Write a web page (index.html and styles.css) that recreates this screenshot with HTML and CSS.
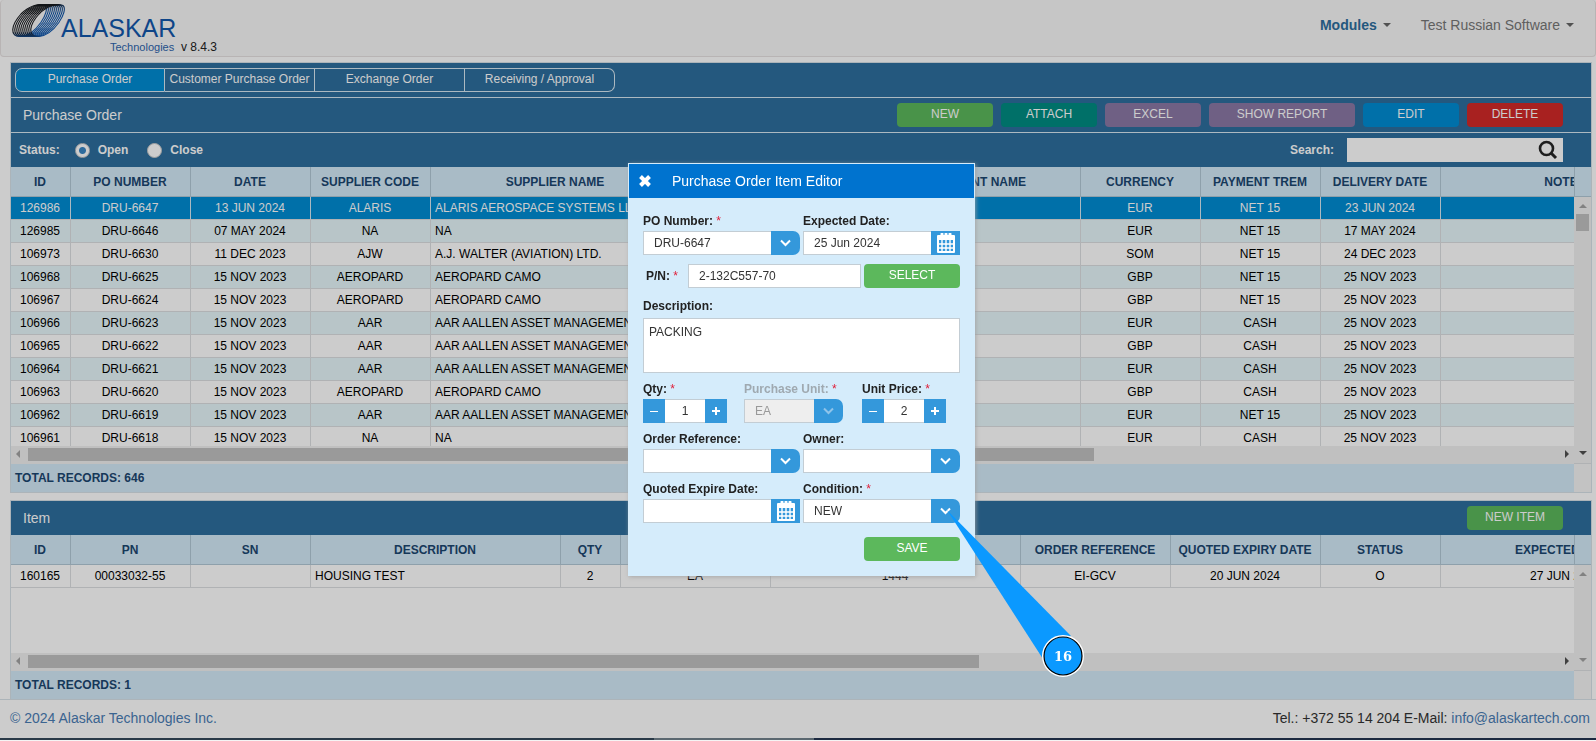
FILE: index.html
```html
<!DOCTYPE html>
<html lang="en">
<head>
    <meta charset="UTF-8">
    <meta name="viewport" content="width=device-width, initial-scale=1.0">
    <title>Purchase Order</title>
    <link rel="stylesheet" href="styles.css">
</head>
<body>

<header class="navbar">
  <div class="brand">
    <svg class="logo" width="176" height="56" viewBox="0 0 176 56" role="img" aria-label="Alaskar Technologies">
      <defs>
        <linearGradient id="ring" gradientUnits="userSpaceOnUse" x1="-8" y1="-6" x2="8" y2="10">
          <stop offset="0.2" stop-color="#16181c"/>
          <stop offset="0.7" stop-color="#1257ab"/>
        </linearGradient>
        <path id="loop" d="M15 -15.5C21 -10 6 14 -9 15.500C-21 16 -19 4 -9 -7C-1 -15 9 -18 15 -15.500Z"/>
      </defs>
      <g fill="none" stroke="url(#ring)" stroke-width="1.1">
        <use href="#loop" x="29" y="21"/>
        <use href="#loop" x="31" y="21"/>
        <use href="#loop" x="33" y="21"/>
        <use href="#loop" x="35" y="21"/>
        <use href="#loop" x="37" y="21"/>
        <use href="#loop" x="39" y="21"/>
        <use href="#loop" x="41" y="21"/>
        <use href="#loop" x="43" y="21"/>
        <use href="#loop" x="45" y="21"/>
        <use href="#loop" x="47" y="21"/>
      </g>
      <text class="logo-name" x="60" y="37">ALASKAR</text>
      <text class="logo-sub" x="109" y="51">Technologies</text>
    </svg>
    <span class="version">v 8.4.3</span>
  </div>
  <nav class="menu">
    <button type="button" class="menu-item strong">Modules <span class="caret"></span></button>
    <button type="button" class="menu-item">Test Russian Software <span class="caret"></span></button>
  </nav>
</header>

<main>
  <section class="panel">
    <div class="bar">
      <div class="tabs">
        <button type="button" class="tab active">Purchase Order</button>
        <button type="button" class="tab">Customer Purchase Order</button>
        <button type="button" class="tab">Exchange Order</button>
        <button type="button" class="tab">Receiving / Approval</button>
      </div>
    </div>
    <div class="bar lined">
      <h1 class="title">Purchase Order</h1>
      <div class="actions">
        <button type="button" class="btn green">NEW</button>
        <button type="button" class="btn teal">ATTACH</button>
        <button type="button" class="btn purple">EXCEL</button>
        <button type="button" class="btn purple wide">SHOW REPORT</button>
        <button type="button" class="btn blue">EDIT</button>
        <button type="button" class="btn red">DELETE</button>
      </div>
    </div>
    <div class="bar lined filter">
      <div class="status">
        <span>Status:</span>
        <label><input type="radio" name="status" checked> Open</label>
        <label><input type="radio" name="status"> Close</label>
      </div>
      <div class="search">
        <label for="search">Search:</label>
        <div class="search-box">
          <input type="text" id="search">
          <svg width="20" height="20" viewBox="0 0 20 20"><circle cx="8.5" cy="8.5" r="6.5" fill="none" stroke="#262626" stroke-width="2.6"/><path d="M13 13l5 5" stroke="#262626" stroke-width="3"/></svg>
        </div>
      </div>
    </div>

    <div class="grid">
      <div class="view orders">
        <table>
          <colgroup>
            <col class="w60"><col class="w120"><col class="w120"><col class="w120"><col class="w250"><col class="w210"><col class="w190"><col class="w120"><col class="w120"><col class="w120"><col class="w250">
          </colgroup>
          <thead>
            <tr><th>ID</th><th>PO NUMBER</th><th>DATE</th><th>SUPPLIER CODE</th><th>SUPPLIER NAME</th><th>CLIENT CODE</th><th>CLIENT NAME</th><th>CURRENCY</th><th>PAYMENT TREM</th><th>DELIVERY DATE</th><th>NOTES</th></tr>
          </thead>
          <tbody>
            <tr class="selected"><td>126986</td><td>DRU-6647</td><td>13 JUN 2024</td><td>ALARIS</td><td class="left">ALARIS AEROSPACE SYSTEMS LLC</td><td></td><td></td><td>EUR</td><td>NET 15</td><td>23 JUN 2024</td><td></td></tr>
            <tr><td>126985</td><td>DRU-6646</td><td>07 MAY 2024</td><td>NA</td><td class="left">NA</td><td></td><td></td><td>EUR</td><td>NET 15</td><td>17 MAY 2024</td><td></td></tr>
            <tr><td>106973</td><td>DRU-6630</td><td>11 DEC 2023</td><td>AJW</td><td class="left">A.J. WALTER (AVIATION) LTD.</td><td></td><td></td><td>SOM</td><td>NET 15</td><td>24 DEC 2023</td><td></td></tr>
            <tr><td>106968</td><td>DRU-6625</td><td>15 NOV 2023</td><td>AEROPARD</td><td class="left">AEROPARD CAMO</td><td></td><td></td><td>GBP</td><td>NET 15</td><td>25 NOV 2023</td><td></td></tr>
            <tr><td>106967</td><td>DRU-6624</td><td>15 NOV 2023</td><td>AEROPARD</td><td class="left">AEROPARD CAMO</td><td></td><td></td><td>GBP</td><td>NET 15</td><td>25 NOV 2023</td><td></td></tr>
            <tr><td>106966</td><td>DRU-6623</td><td>15 NOV 2023</td><td>AAR</td><td class="left">AAR AALLEN ASSET MANAGEMENT</td><td></td><td></td><td>EUR</td><td>CASH</td><td>25 NOV 2023</td><td></td></tr>
            <tr><td>106965</td><td>DRU-6622</td><td>15 NOV 2023</td><td>AAR</td><td class="left">AAR AALLEN ASSET MANAGEMENT</td><td></td><td></td><td>GBP</td><td>CASH</td><td>25 NOV 2023</td><td></td></tr>
            <tr><td>106964</td><td>DRU-6621</td><td>15 NOV 2023</td><td>AAR</td><td class="left">AAR AALLEN ASSET MANAGEMENT</td><td></td><td></td><td>EUR</td><td>CASH</td><td>25 NOV 2023</td><td></td></tr>
            <tr><td>106963</td><td>DRU-6620</td><td>15 NOV 2023</td><td>AEROPARD</td><td class="left">AEROPARD CAMO</td><td></td><td></td><td>GBP</td><td>CASH</td><td>25 NOV 2023</td><td></td></tr>
            <tr><td>106962</td><td>DRU-6619</td><td>15 NOV 2023</td><td>AAR</td><td class="left">AAR AALLEN ASSET MANAGEMENT</td><td></td><td></td><td>EUR</td><td>NET 15</td><td>25 NOV 2023</td><td></td></tr>
            <tr><td>106961</td><td>DRU-6618</td><td>15 NOV 2023</td><td>NA</td><td class="left">NA</td><td></td><td></td><td>EUR</td><td>CASH</td><td>25 NOV 2023</td><td></td></tr>
          </tbody>
        </table>
      </div>
      <div class="side">
        <div class="corner"></div>
        <div class="vscroll">
          <span class="arrow up"></span>
          <span class="vthumb"></span>
          <span class="arrow down on"></span>
        </div>
      </div>
      <div class="hscroll">
        <span class="arrow prev"></span>
        <span class="track"><span class="thumb orders-thumb"></span></span>
        <span class="arrow next on"></span>
      </div>
      <div class="total">TOTAL RECORDS: 646</div>
      <div class="total-end"></div>
    </div>
  </section>

  <section class="panel">
    <div class="bar">
      <h2 class="title">Item</h2>
      <div class="actions">
        <button type="button" class="btn green">NEW ITEM</button>
      </div>
    </div>
    <div class="grid">
      <div class="view items">
        <table>
          <colgroup>
            <col class="w60"><col class="w120"><col class="w120"><col class="w250"><col class="w60"><col class="w150"><col class="w250"><col class="w150"><col class="w150"><col class="w120"><col class="w250">
          </colgroup>
          <thead>
            <tr><th>ID</th><th>PN</th><th>SN</th><th>DESCRIPTION</th><th>QTY</th><th>UNIT</th><th>PRICE</th><th>ORDER REFERENCE</th><th>QUOTED EXPIRY DATE</th><th>STATUS</th><th>EXPECTED DATE</th></tr>
          </thead>
          <tbody>
            <tr><td>160165</td><td>00033032-55</td><td></td><td class="left">HOUSING TEST</td><td>2</td><td>EA</td><td>1444</td><td>EI-GCV</td><td>20 JUN 2024</td><td>O</td><td>27 JUN 2024</td></tr>
          </tbody>
        </table>
      </div>
      <div class="side">
        <div class="corner"></div>
        <div class="vscroll">
          <span class="arrow up"></span>
          <span class="arrow down"></span>
        </div>
      </div>
      <div class="hscroll">
        <span class="arrow prev"></span>
        <span class="track"><span class="thumb items-thumb"></span></span>
        <span class="arrow next on"></span>
      </div>
      <div class="total">TOTAL RECORDS: 1</div>
      <div class="total-end"></div>
    </div>
  </section>
</main>

<footer class="footer">
  <a href="#">© 2024 Alaskar Technologies Inc.</a>
  <span>Tel.: +372 55 14 204 E-Mail: <a href="mailto:info@alaskartech.com">info@alaskartech.com</a></span>
</footer>

<div class="overlay"></div>
<div class="taskbar"></div>

<!-- shared icons -->
<svg class="sprite" width="0" height="0">
  <symbol id="chevron" viewBox="0 0 12 8"><path d="M1 1.500L5.500 6l4.500-4.500" fill="none" stroke="currentColor" stroke-width="2"/></symbol>
  <symbol id="calendar" viewBox="0 0 18 20">
    <path d="M1 3h16v16H1z" fill="none" stroke="currentColor" stroke-width="2" stroke-linejoin="round"/>
    <path d="M1 3h16v4H1z" fill="currentColor"/>
    <path d="M5 1v3M13 1v3M9 1v3" stroke="currentColor" stroke-width="3" stroke-linecap="round"/>
    <path d="M5 7v11M9 7v11M13 7v11M2 11h14M2 15h14" stroke="currentColor" stroke-width="1.4"/>
  </symbol>
</svg>

<div class="modal" role="dialog" aria-labelledby="modal-title">
  <div class="modal-head">
    <button type="button" class="close" aria-label="Close">
      <svg width="14" height="12" viewBox="0 0 14 12"><path d="M2.5 1.5l9 9M11.5 1.5l-9 9" stroke="#fff" stroke-width="4"/></svg>
    </button>
    <h2 id="modal-title">Purchase Order Item Editor</h2>
  </div>
  <form class="modal-body">
    <div class="row">
      <div class="field">
        <label for="po">PO Number: <i>*</i></label>
        <div class="combo">
          <select id="po"><option>DRU-6647</option></select>
          <span class="drop"><svg width="12" height="8"><use href="#chevron"/></svg></span>
        </div>
      </div>
      <div class="field">
        <label for="expected">Expected Date:</label>
        <div class="combo">
          <input type="text" id="expected" value="25 Jun 2024">
          <button type="button" class="pick" aria-label="Pick date"><svg width="18" height="20"><use href="#calendar"/></svg></button>
        </div>
      </div>
    </div>

    <div class="row pn">
      <label for="pn">P/N: <i>*</i></label>
      <input type="text" id="pn" value="2-132C557-70">
      <button type="button" class="btn green">SELECT</button>
    </div>

    <div class="field description">
      <label for="description">Description:</label>
      <textarea id="description">PACKING</textarea>
    </div>

    <div class="row amounts">
      <div class="field">
        <label for="qty">Qty: <i>*</i></label>
        <div class="stepper">
          <button type="button" aria-label="Less"><svg width="10" height="10"><path d="M1 5.500h8" stroke="#fff" stroke-width="1"/></svg></button>
          <input type="text" id="qty" value="1">
          <button type="button" aria-label="More"><svg width="10" height="10"><path d="M1 5h8M5 1v8" stroke="#fff" stroke-width="2"/></svg></button>
        </div>
      </div>
      <div class="field unit">
        <label for="unit">Purchase Unit: <i>*</i></label>
        <div class="combo disabled">
          <select id="unit" disabled><option>EA</option></select>
          <span class="drop"><svg width="12" height="8"><use href="#chevron"/></svg></span>
        </div>
      </div>
      <div class="field">
        <label for="price">Unit Price: <i>*</i></label>
        <div class="stepper">
          <button type="button" aria-label="Less"><svg width="10" height="10"><path d="M1 5.500h8" stroke="#fff" stroke-width="1"/></svg></button>
          <input type="text" id="price" value="2">
          <button type="button" aria-label="More"><svg width="10" height="10"><path d="M1 5h8M5 1v8" stroke="#fff" stroke-width="2"/></svg></button>
        </div>
      </div>
    </div>

    <div class="row">
      <div class="field">
        <label for="reference">Order Reference:</label>
        <div class="combo">
          <select id="reference"><option></option></select>
          <span class="drop"><svg width="12" height="8"><use href="#chevron"/></svg></span>
        </div>
      </div>
      <div class="field">
        <label for="owner">Owner:</label>
        <div class="combo">
          <select id="owner"><option></option></select>
          <span class="drop"><svg width="12" height="8"><use href="#chevron"/></svg></span>
        </div>
      </div>
    </div>

    <div class="row">
      <div class="field">
        <label for="expire">Quoted Expire Date:</label>
        <div class="combo">
          <input type="text" id="expire">
          <button type="button" class="pick" aria-label="Pick date"><svg width="18" height="20"><use href="#calendar"/></svg></button>
        </div>
      </div>
      <div class="field">
        <label for="condition">Condition: <i>*</i></label>
        <div class="combo">
          <select id="condition"><option>NEW</option></select>
          <span class="drop"><svg width="12" height="8"><use href="#chevron"/></svg></span>
        </div>
      </div>
    </div>

    <div class="save">
      <button type="button" class="btn green">SAVE</button>
    </div>
  </form>
</div>

<!-- step marker -->
<svg class="marker" width="150" height="170" viewBox="0 0 150 170">
  <path d="M5 1L129 127L101 150Z" fill="#0b99ff"/>
  <circle cx="121" cy="147" r="20" fill="#0b99ff" stroke="#fff" stroke-width="2"/>
  <circle cx="121" cy="147" r="19" fill="none" stroke="#000" stroke-width="1.2"/>
  <text class="marker-text" x="121" y="152" text-anchor="middle">16</text>
</svg>

</body>
</html>
```
FILE: styles.css
```css
* {
    box-sizing: border-box;
}
body {
    margin: 0;
    background: #fff;
    font-family: "Liberation Sans", Arial, sans-serif;
    font-size: 12px;
    color: #222;
}
button, input, select, textarea {
    font-family: inherit;
    font-size: 12px;
    margin: 0;
}
button {
    border: 0;
    padding: 0;
    cursor: pointer;
}
svg {
    display: block;
}

/* top navigation */
.navbar {
    display: flex;
    justify-content: space-between;
    height: 57px;
    border: 1px solid #e7e2e2;
    border-top: 0;
    border-radius: 4px;
    background: #f8f8f8;
}
.brand {
    display: flex;
}
.logo-name {
    font-size: 25px;
    fill: #1257ab;
}
.logo-sub {
    font-size: 11px;
    fill: #2d64ad;
}
.version {
    padding: 39px 0 0 4px;
    line-height: 17px;
}
.menu {
    display: flex;
    gap: 30px;
    padding: 0 21px 6px 0;
}
.menu-item {
    display: flex;
    align-items: center;
    gap: 6px;
    background: none;
    font-size: 14px;
    color: #777;
}
.strong {
    font-weight: bold;
    color: #2d6e9e;
}
.caret {
    border: 4px solid transparent;
    border-top-color: #666;
    border-bottom: 0;
}

/* panels */
main {
    padding: 5px 4px 0 10px;
}
.panel {
    margin-bottom: 7px;
    border: 1px solid #d8e2e8;
}
.panel:last-child {
    margin-bottom: 0;
    border-bottom: 0;
}
.bar {
    display: flex;
    align-items: center;
    justify-content: space-between;
    height: 34px;
    padding: 0 28px 0 12px;
    background: #2d6e9e;
    color: #fff;
}
.lined {
    height: 35px;
    border-top: 1px solid #d8e8f2;
}
.tabs {
    display: flex;
    margin-left: -8px;
    padding-bottom: 1px;
}
.tab {
    width: 150px;
    height: 24px;
    padding-bottom: 2px;
    border: 1px solid #d8e8f2;
    border-left: 0;
    background: none;
    color: #fff;
    white-space: nowrap;
}
.tab:first-child {
    border-left: 1px solid #d8e8f2;
    border-radius: 7px 0 0 7px;
}
.tab:last-child {
    border-radius: 0 7px 7px 0;
}
.tab.active {
    background: #008cd4;
}
.title {
    margin: 0;
    font-size: 14px;
    font-weight: normal;
}
.actions {
    display: flex;
    gap: 8px;
}
.btn {
    width: 96px;
    height: 24px;
    padding-bottom: 3px;
    border-radius: 4px;
    color: #fff;
}
.wide {
    width: 146px;
}
.green {
    background: #5cb85c;
}
.teal {
    background: #008c83;
}
.purple {
    background: #8b78a6;
}
.blue {
    background: #008cd4;
}
.red {
    background: #d22a28;
}
.filter {
    padding-left: 8px;
    font-weight: bold;
}
.status, .status label, .search {
    display: flex;
    align-items: center;
}
.status {
    gap: 15px;
}
.status label {
    gap: 8px;
    margin-right: 4px;
}
.status input {
    appearance: none;
    width: 15px;
    height: 15px;
    border: 1px solid #c8c8c8;
    border-radius: 50%;
    background: #fff;
}
.status input:checked {
    background: radial-gradient(circle, #3a86c4 3px, #fff 4px);
}
.search {
    gap: 13px;
}
.search-box {
    display: flex;
    align-items: center;
    width: 216px;
    height: 24px;
    padding-right: 5px;
    background: #fff;
}
.search-box input {
    flex: 1;
    min-width: 0;
    border: 0;
    background: none;
}

/* data grids */
.grid {
    display: grid;
    grid-template-columns: minmax(0, 1fr) 17px;
}
.view {
    overflow: hidden;
}
.orders {
    height: 279px;
}
.items {
    height: 118px;
}
table {
    width: 1680px;
    table-layout: fixed;
    border-spacing: 0;
}
.w60 {
    width: 60px;
}
.w120 {
    width: 120px;
}
.w150 {
    width: 150px;
}
.w190 {
    width: 190px;
}
.w210 {
    width: 210px;
}
.w250 {
    width: 250px;
}
th, td {
    padding: 0 5px 0 4px;
    text-align: center;
    white-space: nowrap;
    overflow: hidden;
}
th {
    height: 30px;
    border-right: 1px solid #b2c8d6;
    border-bottom: 1px solid #b2c8d6;
    background: #d4eaf8;
    color: #1b4670;
}
td {
    height: 23px;
    border-right: 1px solid #dcdfe1;
    border-bottom: 1px solid #dcdfe1;
    color: #000;
}
.left {
    text-align: left;
}
tbody tr:nth-child(even) td {
    background: #e7f7fa;
}
tbody .selected td {
    border-right-color: #d8e8f2;
    background: #008cd4;
    color: #fff;
}
.side {
    display: flex;
    flex-direction: column;
    grid-row: 1 / 3;
    grid-column: 2;
}
.corner {
    height: 30px;
    border-left: 1px solid #b2c8d6;
    border-bottom: 1px solid #b2c8d6;
    background: #d4eaf8;
}
.vscroll {
    display: flex;
    flex: 1;
    flex-direction: column;
    align-items: center;
    padding: 7px 0 8px;
    border-bottom: 1px solid #dcdfe1;
    background: #f1f1f1;
}
.vthumb {
    width: 13px;
    height: 17px;
    margin-top: 6px;
    background: #c1c1c1;
}
.hscroll {
    display: flex;
    align-items: center;
    height: 18px;
    padding: 0 5px 2px;
    background: #f1f1f1;
}
.track {
    flex: 1;
    padding: 0 8px;
}
.thumb {
    display: block;
    height: 13px;
    background: #c1c1c1;
}
.orders-thumb {
    width: 69.7%;
}
.items-thumb {
    width: 62.2%;
}
.arrow {
    border: 4px solid transparent;
}
.up {
    border-top: 0;
    border-bottom-color: #a3a3a3;
}
.down {
    margin-top: auto;
    border-bottom: 0;
    border-top-color: #a3a3a3;
}
.prev {
    border-left: 0;
    border-right-color: #a3a3a3;
}
.next {
    border-right: 0;
    border-left-color: #505050;
}
.down.on {
    border-top-color: #505050;
}
.total {
    height: 28px;
    padding-left: 4px;
    background: #d4eaf8;
    color: #1b4670;
    font-weight: bold;
    line-height: 28px;
}
.total-end {
    background: #f4f4f4;
}

.footer {
    display: flex;
    align-items: center;
    justify-content: space-between;
    height: 39px;
    padding: 0 6px 2px 10px;
    border-top: 1px solid #d8e2e8;
    color: #333;
    font-size: 14px;
}
.footer a {
    color: #4a7db5;
    text-decoration: none;
}

.overlay {
    position: fixed;
    inset: 0;
    background: rgba(0, 0, 0, 0.2);
}
.taskbar {
    position: fixed;
    right: 0;
    bottom: 0;
    left: 0;
    height: 3px;
    border-bottom: 1px solid #f4f4f4;
    background: linear-gradient(90deg, #2a3a48 41%, #5b6870 41% 51%, #1c2a40 51%);
}
.sprite {
    position: absolute;
}

/* item editor */
.modal {
    position: absolute;
    top: 163px;
    left: 628px;
    width: 347px;
    border: 1px solid #d5ecfb;
    background: #d5ecfb;
    box-shadow: 1px 1px 4px rgba(160, 160, 160, 0.8);
}
.modal-head {
    display: flex;
    align-items: center;
    gap: 20px;
    height: 34px;
    padding-left: 9px;
    background: #0073cf;
}
.modal-head h2 {
    margin: 0;
    color: #fff;
    font-size: 14px;
    font-weight: normal;
}
.close {
    background: none;
}
.modal-body {
    display: flex;
    flex-direction: column;
    gap: 9px;
    padding: 16px 14px 14px;
}
.row {
    display: flex;
    gap: 3px;
}
.row > .field {
    flex: 1 1 0;
    min-width: 0;
}
label {
    font-weight: bold;
}
.modal-body label {
    line-height: 15px;
    white-space: nowrap;
}
.modal-body label i {
    color: #e0203a;
    font-style: normal;
    font-weight: normal;
}
.field {
    display: flex;
    flex-direction: column;
    gap: 2px;
}
.modal-body input, .modal-body select, .modal-body textarea {
    min-width: 0;
    height: 24px;
    padding: 0 10px;
    border: 1px solid #c3cdd4;
    border-radius: 0;
    background: #fff;
    color: #333;
    appearance: none;
}
.combo {
    display: flex;
}
.combo input, .combo select {
    flex: 1;
    border-right: 0;
}
.drop, .pick {
    display: flex;
    flex: none;
    align-items: center;
    justify-content: center;
    width: 29px;
    height: 24px;
    background: #3498db;
    color: #fff;
}
.drop {
    border-radius: 0 7px 7px 0;
}
.pn {
    align-items: center;
}
.pn label {
    width: 42px;
    padding-left: 3px;
}
.pn input {
    flex: 1;
}
.description {
    gap: 4px;
    padding-top: 2px;
}
.modal-body textarea {
    height: 55px;
    padding: 6px 5px;
    resize: none;
}
.amounts {
    gap: 17px;
}
.row.amounts > .field {
    flex: none;
}
.stepper {
    display: flex;
}
.stepper button {
    display: flex;
    align-items: center;
    justify-content: center;
    width: 22px;
    background: #3498db;
}
.stepper input {
    width: 40px;
    padding: 0;
    border-right: 0;
    border-left: 0;
    text-align: center;
}
.unit {
    width: 101px;
}
.unit label {
    color: #9fa9b0;
}
.unit .combo {
    width: 99px;
}
.modal-body .disabled select {
    background: #eee;
    color: #999;
    opacity: 1;
}
.disabled .drop {
    color: #8fc4ea;
}
.save {
    padding-top: 5px;
    text-align: right;
}

.marker {
    position: absolute;
    top: 509px;
    left: 942px;
}
.marker-text {
    fill: #fff;
    font-family: "DejaVu Serif", serif;
    font-size: 13px;
    font-weight: bold;
}
```
